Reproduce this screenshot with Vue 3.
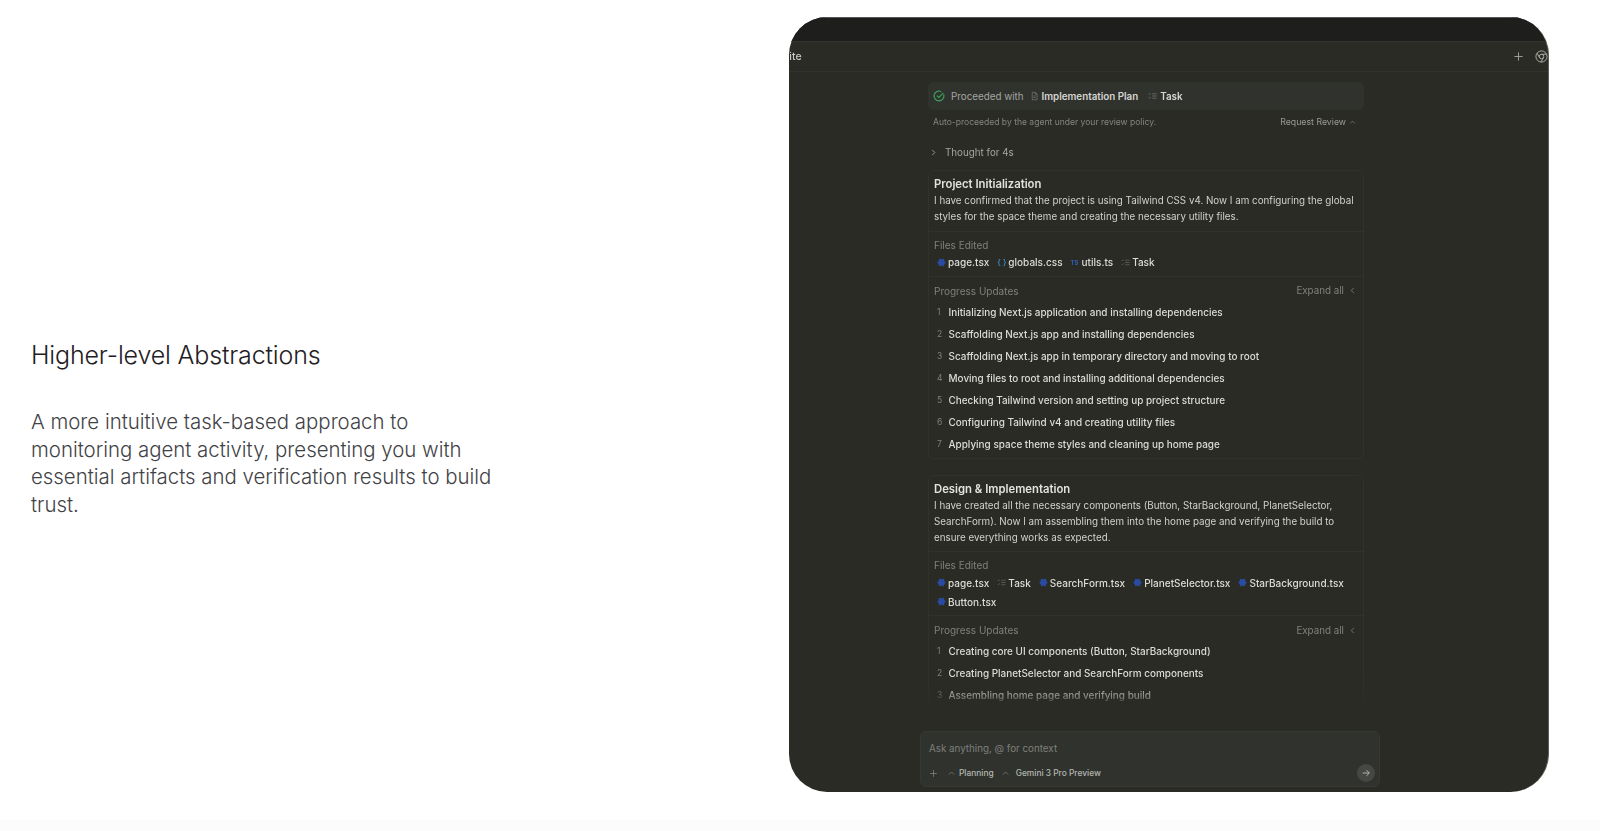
<script setup>
const cards = [
  {
    title: 'Project Initialization',
    desc: ['I have confirmed that the project is using Tailwind CSS v4. Now I am configuring the global', 'styles for the space theme and creating the necessary utility files.'],
    files: [[
      { name: 'page.tsx', icon: 'react' },
      { name: 'globals.css', icon: 'css' },
      { name: 'utils.ts', icon: 'ts' },
      { name: 'Task', icon: 'task' }
    ]],
    steps: [
      'Initializing Next.js application and installing dependencies',
      'Scaffolding Next.js app and installing dependencies',
      'Scaffolding Next.js app in temporary directory and moving to root',
      'Moving files to root and installing additional dependencies',
      'Checking Tailwind version and setting up project structure',
      'Configuring Tailwind v4 and creating utility files',
      'Applying space theme styles and cleaning up home page'
    ]
  },
  {
    title: 'Design & Implementation',
    desc: ['I have created all the necessary components (Button, StarBackground, PlanetSelector,', 'SearchForm). Now I am assembling them into the home page and verifying the build to', 'ensure everything works as expected.'],
    files: [[
      { name: 'page.tsx', icon: 'react' },
      { name: 'Task', icon: 'task' },
      { name: 'SearchForm.tsx', icon: 'react' },
      { name: 'PlanetSelector.tsx', icon: 'react' },
      { name: 'StarBackground.tsx', icon: 'react' }
    ], [
      { name: 'Button.tsx', icon: 'react' }
    ]],
    steps: [
      'Creating core UI components (Button, StarBackground)',
      'Creating PlanetSelector and SearchForm components',
      'Assembling home page and verifying build'
    ]
  }
]
</script>

<template>
  <div class="page">
    <section class="intro">
      <h1>Higher-level Abstractions</h1>
      <p>A more intuitive task-based approach to monitoring agent activity, presenting you with essential artifacts and verification results to build trust.</p>
    </section>

    <section class="window">
      <div class="titlebar"></div>
      <div class="tabbar">
        <span class="tab-name">Website</span>
        <svg class="tab-plus" viewBox="0 0 12 12"><path d="M6 1.5v9M1.5 6h9" /></svg>
        <svg class="tab-chrome" viewBox="0 0 14 14">
          <circle cx="7" cy="7" r="6" />
          <circle cx="7" cy="7" r="2.4" />
          <path d="M7 4.6h5.4M4.9 8.2 2.2 3.5M9.1 8.2l-2.7 4.7" />
        </svg>
      </div>

      <div class="body">
        <div class="scroller">
          <div class="proceeded">
            <svg class="check" viewBox="0 0 14 14">
              <path d="M12.4 5.2A5.7 5.7 0 1 1 9.6 1.9" />
              <path d="M4.6 6.6 6.8 8.8 12 3.4" />
            </svg>
            <span class="proceeded-label">Proceeded with</span>
            <span class="proceeded-item">
              <svg class="mini" viewBox="0 0 12 12"><path d="M3 1h4l2.5 2.5V11H3zM7 1v2.5h2.5M4.600 6h3M4.600 8h3" /></svg>
              Implementation Plan
            </span>
            <span class="proceeded-item">
              <svg class="mini" viewBox="0 0 12 12"><path d="M1 3l1 1 1.500-1.800M1 8l1 1 1.500-1.800M5.500 3h6M5.500 6h6M5.500 9h6" /></svg>
              Task
            </span>
          </div>
          <div class="policy">
            <span>Auto-proceeded by the agent under your review policy.</span>
            <span class="review">Request Review
              <svg class="up" viewBox="0 0 8 8"><path d="M1.500 5 4 2.500 6.500 5" /></svg>
            </span>
          </div>
          <div class="thought">
            <svg class="thought-chev" viewBox="0 0 8 8"><path d="M2.500 1 5.500 4 2.500 7" /></svg>
            Thought for 4s
          </div>

          <article v-for="card in cards" :key="card.title" class="card">
            <div class="card-head">
              <h2>{{ card.title }}</h2>
              <div v-for="line in card.desc" :key="line" class="desc">{{ line }}</div>
            </div>
            <div class="card-files">
              <div class="caption">Files Edited</div>
              <div v-for="(row, i) in card.files" :key="i" class="file-row">
                <span v-for="file in row" :key="file.name" class="file">
                  <svg v-if="file.icon === 'react'" class="file-icon react" viewBox="0 0 12 12">
                    <ellipse cx="6" cy="6" rx="5.200" ry="2.100" />
                    <ellipse cx="6" cy="6" rx="5.200" ry="2.100" transform="rotate(60 6 6)" />
                    <ellipse cx="6" cy="6" rx="5.200" ry="2.100" transform="rotate(120 6 6)" />
                    <circle cx="6" cy="6" r="2.400" />
                  </svg>
                  <span v-else-if="file.icon === 'css'" class="file-icon css">{ }</span>
                  <span v-else-if="file.icon === 'ts'" class="file-icon ts">TS</span>
                  <svg v-else class="file-icon task" viewBox="0 0 12 12"><path d="M1 3l1 1 1.500-1.800M1 8l1 1 1.500-1.800M5.500 3h6M5.500 6h6M5.500 9h6" /></svg>
                  {{ file.name }}
                </span>
              </div>
            </div>
            <div class="card-steps">
              <div class="steps-head">
                <span class="caption">Progress Updates</span>
                <span class="expand">Expand all
                  <svg class="expand-chev" viewBox="0 0 8 8"><path d="M5.500 1 2.500 4 5.500 7" /></svg>
                </span>
              </div>
              <div v-for="(step, i) in card.steps" :key="step" class="step">
                <span class="step-num">{{ i + 1 }}</span>
                <span>{{ step }}</span>
              </div>
            </div>
          </article>
        </div>

        <div class="composer">
          <div class="composer-input">Ask anything, @ for context</div>
          <div class="composer-tools">
            <svg class="composer-plus" viewBox="0 0 12 12"><path d="M6 1.500v9M1.500 6h9" /></svg>
            <span class="tool">
              <svg class="up" viewBox="0 0 8 8"><path d="M1 5.200 4 2.200 7 5.200" /></svg>
              Planning
            </span>
            <span class="tool">
              <svg class="up" viewBox="0 0 8 8"><path d="M1 5.200 4 2.200 7 5.200" /></svg>
              Gemini 3 Pro Preview
            </span>
            <span class="send">
              <svg viewBox="0 0 12 12"><path d="M2 6h8M6.500 2.500 10 6l-3.500 3.500" /></svg>
            </span>
          </div>
        </div>
      </div>
    </section>
  </div>
</template>

<style scoped>
.page {
  width: 1600px;
  height: 831px;
  box-sizing: border-box;
  padding: 17px 51px 39px 31px;
  display: flex;
  justify-content: space-between;
  overflow: hidden;
  background: linear-gradient(#fff 820px, #fcfcfc 820px);
  font-family: Inter, "Noto Sans", sans-serif;
}

.intro {
  width: 480px;
  padding-top: 322px;
}

.intro h1 {
  margin: 0;
  font-size: 25px;
  line-height: 32px;
  font-weight: 350;
  color: #1f2023;
  letter-spacing: -0.15px;
}

.intro p {
  margin: 37px 0 0;
  font-size: 20.4px;
  line-height: 27.5px;
  font-weight: 350;
  color: #3f4246;
}

.window {
  width: 760px;
  height: 775px;
  box-sizing: border-box;
  border-radius: 38px;
  border-right: 1px solid #5c5d58;
  overflow: hidden;
  background: #2a2b25;
  display: flex;
  flex-direction: column;
  filter: blur(0.4px);
}

.titlebar {
  height: 25px;
  flex: none;
  box-sizing: border-box;
  background: #1e1f1c;
  border-top: 1px solid #55565a;
  border-bottom: 1px solid #33342f;
}

.tabbar {
  height: 30px;
  flex: none;
  box-sizing: border-box;
  display: flex;
  align-items: center;
  border-bottom: 1px solid #31322c;
  color: #c9c9c5;
  font-size: 10.5px;
  font-weight: 500;
}

.tab-name {
  margin-left: -28px;
}

.tab-plus {
  width: 11px;
  height: 11px;
  margin-left: auto;
  fill: none;
  stroke: #a5a5a0;
  stroke-width: 1;
}

.tab-chrome {
  width: 13px;
  height: 13px;
  margin-left: 11px;
  fill: none;
  stroke: #b5b5b0;
  stroke-width: 1;
}

.body {
  flex: 1;
  min-height: 0;
  display: flex;
  flex-direction: column;
}

.scroller {
  width: 436px;
  height: 634px;
  flex: none;
  box-sizing: border-box;
  margin-left: 139px;
  padding-top: 10px;
  overflow: hidden;
  -webkit-mask-image: linear-gradient(#000 604px, rgba(0, 0, 0, 0.55) 624px, transparent 634px);
  mask-image: linear-gradient(#000 604px, rgba(0, 0, 0, 0.55) 624px, transparent 634px);
}

.proceeded {
  height: 28px;
  box-sizing: border-box;
  padding-left: 5px;
  border-radius: 6px;
  background: #30322e;
  display: flex;
  align-items: center;
  font-size: 9.800px;
}

.check {
  width: 12px;
  height: 12px;
  fill: none;
  stroke: #3fa862;
  stroke-width: 1.300;
}

.proceeded-label {
  margin-left: 6px;
  margin-right: 6px;
  color: #a5a6a1;
}

.proceeded-item {
  display: inline-flex;
  align-items: center;
  gap: 3px;
  margin-right: 10px;
  color: #d6d6d2;
  font-weight: 600;
}

.mini {
  width: 9px;
  height: 10px;
  fill: none;
  stroke: #85867f;
  stroke-width: 0.800;
}

.policy {
  height: 24px;
  padding: 0 8px 0 5px;
  display: flex;
  align-items: center;
  justify-content: space-between;
  font-size: 8.550px;
  color: #85867f;
}

.review {
  display: inline-flex;
  align-items: center;
  gap: 3px;
  font-size: 8.750px;
  color: #9a9b95;
}

.up {
  width: 7px;
  height: 7px;
  fill: none;
  stroke: #85867f;
  stroke-width: 0.800;
}

.thought {
  height: 26px;
  margin-top: 5px;
  padding-left: 2px;
  display: flex;
  align-items: center;
  gap: 8px;
  font-size: 9.800px;
  color: #a5a6a1;
}

.thought-chev {
  width: 7px;
  height: 7px;
  fill: none;
  stroke: #a5a6a1;
  stroke-width: 1;
}

.card {
  box-sizing: border-box;
  border: 1px solid #31322d;
  border-radius: 6px;
  margin-top: 5px;
  margin-bottom: 16px;
}

.card-head {
  padding: 5px 5px 5.5px;
  border-bottom: 1px solid #31322d;
}

.card-head h2 {
  margin: 0;
  height: 17px;
  line-height: 17px;
  font-size: 11.300px;
  font-weight: 600;
  color: #e2e2de;
}

.desc {
  height: 16px;
  line-height: 16px;
  font-size: 9.800px;
  color: #d2d2ce;
  white-space: nowrap;
}

.card-files {
  padding: 5px 5px 4px;
  border-bottom: 1px solid #31322d;
}

.caption {
  height: 16px;
  line-height: 16px;
  font-size: 10px;
  color: #7f807a;
}

.file-row {
  height: 19px;
  padding-left: 3px;
  display: flex;
  align-items: center;
  gap: 8px;
  font-size: 10px;
  font-weight: 500;
  color: #dcdcd8;
}

.file {
  display: inline-flex;
  align-items: center;
  gap: 2px;
}

.file-icon {
  width: 9px;
  height: 9px;
  flex: none;
}

.react {
  fill: #2a4aa0;
  stroke: #2d4fa8;
  stroke-width: 0.800;
}

.css {
  color: #3e93c9;
  font-size: 8px;
  line-height: 9px;
  white-space: nowrap;
}

.ts {
  color: #2f5fb5;
  font-size: 6px;
  line-height: 9px;
  font-weight: 700;
}

.task {
  fill: none;
  stroke: #75766f;
  stroke-width: 0.800;
}

.card-steps {
  padding: 6px 5px 3px;
}

.steps-head {
  height: 16px;
  margin-bottom: 2px;
  display: flex;
  align-items: center;
  justify-content: space-between;
}

.expand {
  display: inline-flex;
  align-items: center;
  gap: 5px;
  padding-right: 2px;
  font-size: 9.800px;
  color: #7f807a;
}

.expand-chev {
  width: 7px;
  height: 7px;
  fill: none;
  stroke: #85867f;
  stroke-width: 0.900;
}

.step {
  height: 22px;
  display: flex;
  align-items: center;
  font-size: 9.950px;
  font-weight: 500;
  color: #dcdcd8;
}

.step-num {
  width: 14.500px;
  flex: none;
  padding-left: 3px;
  box-sizing: border-box;
  font-size: 8.500px;
  font-weight: 400;
  color: #7f807a;
}

.composer {
  flex: none;
  width: 460px;
  height: 56px;
  margin-top: 25px;
  margin-left: 131px;
  box-sizing: border-box;
  border: 1px solid #363834;
  border-radius: 6px;
  background: #30322e;
  padding: 0 4px 0 8px;
}

.composer-input {
  height: 30px;
  padding-top: 2px;
  box-sizing: border-box;
  display: flex;
  align-items: center;
  font-size: 9.800px;
  color: #7f807a;
}

.composer-tools {
  height: 22px;
  display: flex;
  align-items: center;
  font-size: 8.400px;
  font-weight: 500;
  color: #b5b6b0;
}

.composer-plus {
  width: 9px;
  height: 9px;
  margin-right: 10px;
  fill: none;
  stroke: #85867f;
  stroke-width: 1;
}

.tool {
  display: inline-flex;
  align-items: center;
  gap: 4px;
  margin-right: 8px;
}

.tool + .tool {
  gap: 7px;
}

.send {
  width: 18px;
  height: 18px;
  margin-left: auto;
  border-radius: 50%;
  background: #464843;
  display: flex;
  align-items: center;
  justify-content: center;
}

.send svg {
  width: 10px;
  height: 10px;
  fill: none;
  stroke: #c5c5c0;
  stroke-width: 1;
}
</style>
